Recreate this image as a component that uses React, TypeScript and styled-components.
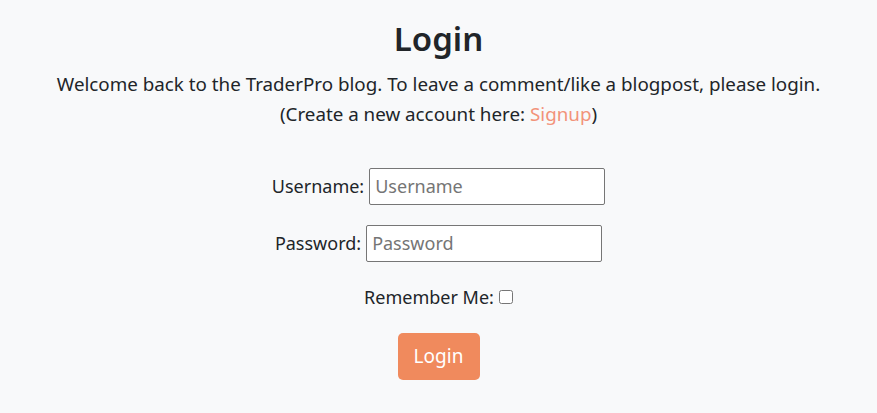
import React from "react"
import styled, { createGlobalStyle } from "styled-components"

const GlobalStyle = createGlobalStyle`
  html, body {
    margin: 0;
    padding: 0;
    background: #f8f9fa;
  }
  body {
    font-family: "Noto Sans", "Open Sans", sans-serif;
    color: #212529;
  }
`

const Page = styled.main`
  min-height: 413px;
  padding-top: 19px;
  text-align: center;
  box-sizing: border-box;
`

const Title = styled.h1`
  margin: 0 0 10px;
  font-size: 33px;
  font-weight: 600;
  line-height: 1.2;
`

const Intro = styled.p`
  margin: 0 0 39px;
  font-size: 18.8px;
  line-height: 30px;
`

const Link = styled.a`
  color: #f2937a;
  text-decoration: none;
`

const Form = styled.form`
  display: flex;
  flex-direction: column;
  align-items: center;
  gap: 20px;
`

const Row = styled.div<{ $extraTop?: number }>`
  display: flex;
  align-items: center;
  justify-content: center;
  font-size: 18px;
  margin-top: ${p => p.$extraTop ?? 0}px;
`

const Label = styled.label`
  margin-right: 5px;
`

const Input = styled.input`
  width: 236px;
  height: 37px;
  box-sizing: border-box;
  padding: 0 5px;
  border: 1px solid #767676;
  border-radius: 2px;
  background: #fff;
  font-family: inherit;
  font-size: 18px;
  color: #212529;
  &::placeholder {
    color: #757575;
  }
`

const Checkbox = styled.input`
  width: 14px;
  height: 14px;
  margin: 0 0 0 0;
`

const Button = styled.button`
  margin-top: 4px;
  width: 82px;
  height: 47px;
  border: none;
  border-radius: 5px;
  background: #f08a5d;
  color: #fff;
  font-family: inherit;
  font-size: 19px;
  cursor: pointer;
`

export default function App() {
  return (
    <>
      <GlobalStyle />
      <Page>
        <Title>Login</Title>
        <Intro>
          Welcome back to the TraderPro blog. To leave a comment/like a blogpost, please login.
          <br />
          (Create a new account here: <Link href="#">Signup</Link>)
        </Intro>
        <Form onSubmit={e => e.preventDefault()}>
          <Row>
            <Label htmlFor="username">Username:</Label>
            <Input id="username" type="text" placeholder="Username" />
          </Row>
          <Row>
            <Label htmlFor="password">Password:</Label>
            <Input id="password" type="password" placeholder="Password" />
          </Row>
          <Row $extraTop={3}>
            <Label htmlFor="remember">Remember Me:</Label>
            <Checkbox id="remember" type="checkbox" />
          </Row>
          <Button type="submit">Login</Button>
        </Form>
      </Page>
    </>
  )
}
